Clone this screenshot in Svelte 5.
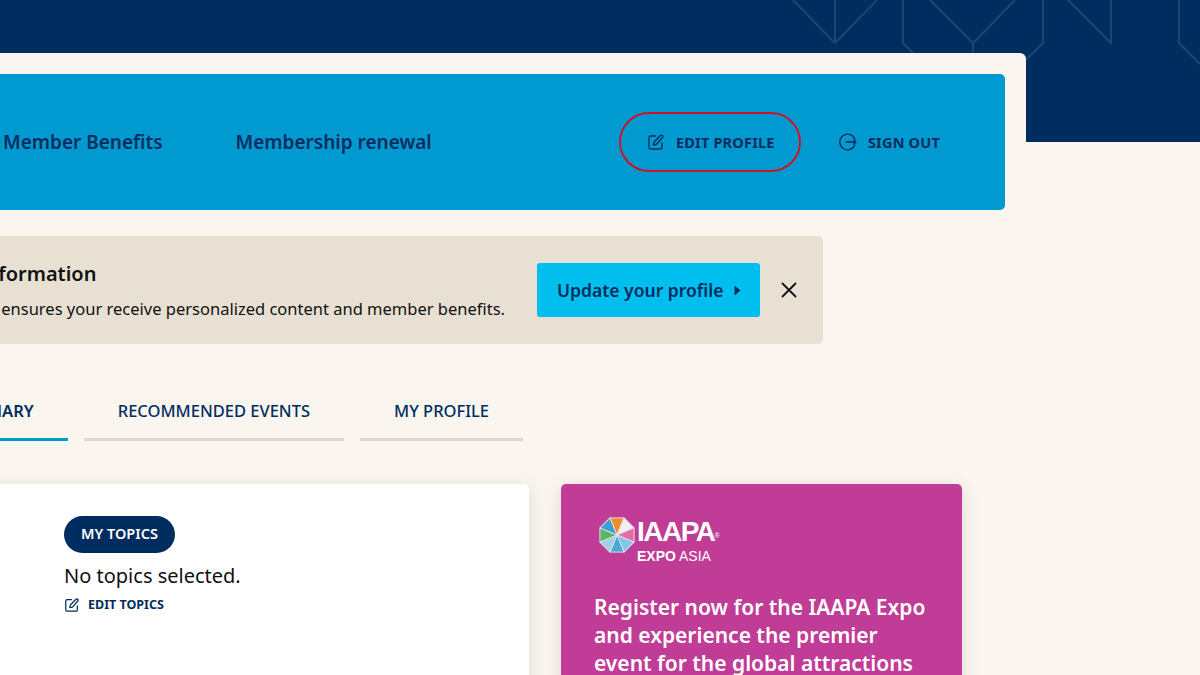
<script>
	const tabs = [
		{ text: 'SUMMARY', active: true },
		{ text: 'RECOMMENDED EVENTS' },
		{ text: 'MY PROFILE' }
	];
	const wheel = [
		['#f28c28', 0], ['#f0f0f0', 45], ['#e86aa6', 90], ['#7fc8e8', 135],
		['#4fa6d8', 180], ['#9ed0e6', 225], ['#5bb56a', 270], ['#3f9fd0', 315]
	];
</script>

{#snippet editIcon(size)}
	<svg class="icon" width={size} height={size} viewBox="0 0 18 18" fill="none" stroke="currentColor" stroke-width="1.4" stroke-linecap="round" stroke-linejoin="round">
		<path d="M8.5 3H3.5A1.5 1.5 0 0 0 2 4.5v10A1.5 1.5 0 0 0 3.500 16h10a1.500 1.500 0 0 0 1.500-1.500V10" />
		<path d="M6.500 12l.6-3L13.500 2.500a1.400 1.400 0 0 1 2 0a1.400 1.400 0 0 1 0 2L9.500 11.300z" />
	</svg>
{/snippet}

<div class="page">
	<div class="hero">
		<svg class="pattern" width="420" height="142" viewBox="780 0 420 142" fill="none" stroke="#1c4672" stroke-width="2">
			<path d="M793 0L835 43L877 0M835 0V43" />
			<path d="M903 0V43L945 85M1043 0V43L1000 85" />
			<path d="M930 0L973 43L1015 0M973 43V60" />
			<path d="M1068 0L1111 43V0" />
			<path d="M1179 0V43L1200 64" />
		</svg>
	</div>

	<main class="panel">
		<nav class="nav">
			<div class="links">
				<a href="#benefits">Member Benefits</a>
				<a href="#renewal">Membership renewal</a>
			</div>
			<div class="actions">
				<a class="action circled" href="#edit">
					{@render editIcon(18)}
					EDIT PROFILE
				</a>
				<a class="action" href="#out">
					<svg class="icon" width="18" height="18" viewBox="0 0 18 18" fill="none" stroke="currentColor" stroke-width="1.300" stroke-linecap="round">
						<path d="M15.800 6A7.800 7.800 0 1 0 15.800 12" />
						<path d="M7 9H17M14.800 7L17 9L14.800 11" />
					</svg>
					SIGN OUT
				</a>
			</div>
		</nav>

		<section class="notice">
			<div class="notice-text">
				<h2>Complete your information</h2>
				<p>Updating your profile ensures your receive personalized content and member benefits.</p>
			</div>
			<button class="update">
				Update your profile
				<svg width="7" height="11" viewBox="0 0 7 11"><path d="M0.500 0.500L6.500 5.500L0.500 10.500z" fill="currentColor" /></svg>
			</button>
			<svg class="close" width="16" height="16" viewBox="0 0 16 16" stroke="#111" stroke-width="1.800" stroke-linecap="round"><path d="M1.500 1.500L14.500 14.500M14.500 1.500L1.500 14.500" /></svg>
		</section>

		<div class="tabs">
			{#each tabs as tab}
				<div class="tab" class:active={tab.active}>{tab.text}</div>
			{/each}
		</div>

		<div class="cards">
			<section class="card topics">
				<span class="pill">MY TOPICS</span>
				<p>No topics selected.</p>
				<a class="edit-topics" href="#topics">
					{@render editIcon(16)}
					EDIT TOPICS
				</a>
			</section>

			<section class="card promo">
				<div class="logo">
					<svg width="38" height="38" viewBox="-20 -20 40 40">
						{#each wheel as [color, angle]}
							<path d="M0 0L-7.400 -18L7.400 -18z" fill={color} stroke="#e4dfe6" stroke-width="1" transform="rotate({angle})" />
						{/each}
					</svg>
					<div class="wordmark">
						<span class="iaapa">IAAPA<sup>®</sup></span>
						<span class="expo"><b>EXPO</b> ASIA</span>
					</div>
				</div>
				<h3>Register now for the IAAPA Expo and experience the premier event for the global attractions industry</h3>
			</section>
		</div>
	</main>
</div>

<style>
	:global(body) {
		background: #faf6ef;
	}

	.page {
		position: relative;
		width: 1200px;
		height: 675px;
		overflow: hidden;
		padding-top: 53px;
		box-sizing: border-box;
		font-family: "Noto Sans", sans-serif;
		color: #111;
	}

	.hero {
		position: absolute;
		top: 0;
		left: 0;
		right: 0;
		height: 142px;
		background: #002d5f;
	}

	.pattern {
		position: absolute;
		top: 0;
		right: 0;
	}

	.panel {
		position: relative;
		width: 1226px;
		margin-left: -200px;
		padding: 21px 21px 0 0;
		box-sizing: border-box;
		background: #faf6ef;
		border-radius: 6px;
	}

	.nav {
		display: flex;
		align-items: center;
		justify-content: space-between;
		height: 136px;
		background: #009ad0;
		border-radius: 5px;
		padding-bottom: 1px;
		box-sizing: border-box;
	}

	.links {
		display: flex;
		gap: 73px;
		margin-left: 203px;
	}

	.links a {
		color: #002d5f;
		font-size: 19px;
		font-weight: 600;
		text-decoration: none;
	}

	.actions {
		display: flex;
		align-items: center;
		gap: 38px;
		margin-right: 65px;
	}

	.action {
		display: flex;
		align-items: center;
		gap: 11px;
		color: #002d5f;
		font-size: 14.500px;
		font-weight: 700;
		letter-spacing: 0.2px;
		text-decoration: none;
	}

	.circled {
		height: 60px;
		width: 182px;
		padding-left: 26px;
		box-sizing: border-box;
		border: 2.500px solid #cc1426;
		border-radius: 30px;
	}

	.icon {
		flex: none;
	}

	.notice {
		display: flex;
		align-items: center;
		justify-content: flex-end;
		width: 1023px;
		height: 108px;
		margin-top: 26px;
		padding-right: 26px;
		box-sizing: border-box;
		background: #e8e1d3;
		border-radius: 5px;
	}

	.notice-text {
		margin-right: 32px;
		white-space: nowrap;
	}

	.notice-text h2 {
		margin: 0 0 9px;
		font-size: 20px;
		line-height: 28px;
		font-weight: 600;
		color: #111;
	}

	.notice-text p {
		margin: 0;
		font-size: 16.500px;
		line-height: 24px;
	}

	.update {
		display: flex;
		align-items: center;
		gap: 11px;
		width: 223px;
		height: 54px;
		padding: 0 0 0 20px;
		border: none;
		border-radius: 3px;
		background: #00bfee;
		color: #002d5f;
		font: 600 17.500px "Noto Sans", sans-serif;
	}

	.close {
		margin-left: 21px;
	}

	.tabs {
		display: flex;
		gap: 16px;
		margin-top: 53px;
		margin-left: 116px;
	}

	.tab {
		padding: 0 34px;
		height: 44px;
		line-height: 28px;
		box-sizing: border-box;
		border-bottom: 3px solid #dcd9d2;
		color: #002d5f;
		font-size: 16.500px;
		font-weight: 500;
	}

	.tab.active {
		border-bottom-color: #009ad0;
		font-weight: 600;
	}

	.cards {
		display: flex;
		gap: 32px;
		margin-top: 43px;
	}

	.card {
		height: 300px;
		box-sizing: border-box;
		border-radius: 5px;
		box-shadow: 0 4px 18px rgba(60, 50, 30, 0.14);
	}

	.topics {
		width: 729px;
		padding: 32px 0 0 264px;
		background: #fff;
	}

	.pill {
		display: inline-block;
		padding: 0 17px;
		height: 37px;
		line-height: 35px;
		border-radius: 19px;
		background: #002d5f;
		color: #fff;
		font-size: 14.500px;
		font-weight: 600;
	}

	.topics p {
		margin: 9px 0 0;
		font-size: 20px;
		line-height: 28px;
	}

	.edit-topics {
		display: flex;
		align-items: center;
		gap: 8px;
		margin-top: 6px;
		color: #002d5f;
		font-size: 12.500px;
		font-weight: 700;
		text-decoration: none;
	}

	.promo {
		width: 401px;
		padding: 32px 33px 0;
		background: #c03c96;
		color: #fff;
	}

	.logo {
		display: flex;
		align-items: flex-start;
		gap: 1px;
		margin-left: 4px;
	}

	.wordmark {
		display: flex;
		flex-direction: column;
		margin-top: 3px;
		font-family: "Liberation Sans", sans-serif;
	}

	.iaapa {
		font-size: 28px;
		line-height: 26px;
		font-weight: 700;
		letter-spacing: -1.500px;
	}

	.iaapa sup {
		font-size: 7px;
		font-weight: 400;
		letter-spacing: 0;
		vertical-align: 3px;
	}

	.expo {
		font-size: 14px;
		line-height: 15px;
	}

	.promo h3 {
		margin: 29px 0 0;
		font-size: 21px;
		line-height: 28px;
		font-weight: 600;
	}
</style>
